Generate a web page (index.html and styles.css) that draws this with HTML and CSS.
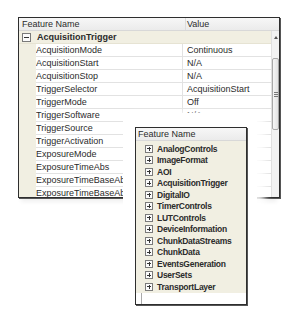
FILE: index.html
```html
<!DOCTYPE html>
<html lang="en">
<head>
    <meta charset="UTF-8">
    <title>Feature Grid</title>
    <link rel="stylesheet" href="styles.css">
</head>
<body>

<!-- Main feature grid -->
<div class="grid-window">
    <div class="grid-head">
        <div class="head-name">Feature Name</div>
        <div class="head-value">Value</div>
    </div>
    <div class="grid-body">
        <div class="rows">
            <div class="group"><span class="box minus"></span>AcquisitionTrigger</div>
            <div class="row"><span class="name">AcquisitionMode</span><span class="value">Continuous</span></div>
            <div class="row"><span class="name">AcquisitionStart</span><span class="value">N/A</span></div>
            <div class="row"><span class="name">AcquisitionStop</span><span class="value">N/A</span></div>
            <div class="row"><span class="name">TriggerSelector</span><span class="value">AcquisitionStart</span></div>
            <div class="row"><span class="name">TriggerMode</span><span class="value">Off</span></div>
            <div class="row"><span class="name">TriggerSoftware</span><span class="value">N/A</span></div>
            <div class="row"><span class="name">TriggerSource</span><span class="value"></span></div>
            <div class="row"><span class="name">TriggerActivation</span><span class="value"></span></div>
            <div class="row"><span class="name">ExposureMode</span><span class="value"></span></div>
            <div class="row"><span class="name">ExposureTimeAbs</span><span class="value"></span></div>
            <div class="row"><span class="name">ExposureTimeBaseAbs</span><span class="value"></span></div>
            <div class="row"><span class="name">ExposureTimeBaseAbsUnit</span><span class="value"></span></div>
        </div>
        <div class="scrollbar">
            <div class="arrow"></div>
            <div class="thumb"><span class="grip"></span></div>
        </div>
    </div>
</div>

<!-- Collapsed category view, pasted over the grid -->
<div class="overlay">
    <div class="tree-window">
        <div class="tree-head">Feature Name</div>
        <div class="tree-rows">
            <div class="cat"><span class="box plus"></span>AnalogControls</div>
            <div class="cat"><span class="box plus"></span>ImageFormat</div>
            <div class="cat"><span class="box plus"></span>AOI</div>
            <div class="cat"><span class="box plus"></span>AcquisitionTrigger</div>
            <div class="cat"><span class="box plus"></span>DigitalIO</div>
            <div class="cat"><span class="box plus"></span>TimerControls</div>
            <div class="cat"><span class="box plus"></span>LUTControls</div>
            <div class="cat"><span class="box plus"></span>DeviceInformation</div>
            <div class="cat"><span class="box plus"></span>ChunkDataStreams</div>
            <div class="cat"><span class="box plus"></span>ChunkData</div>
            <div class="cat"><span class="box plus"></span>EventsGeneration</div>
            <div class="cat"><span class="box plus"></span>UserSets</div>
            <div class="cat"><span class="box plus"></span>TransportLayer</div>
        </div>
        <div class="tree-empty"></div>
    </div>
</div>

</body>
</html>
```

FILE: styles.css
```css
body {
    margin: 0;
    padding: 0;
    background: #ffffff;
    font-family: "Liberation Sans", Arial, sans-serif;
    font-size: 9px;
    color: #2b2b2b;
    position: relative;
    width: 300px;
    height: 330px;
    overflow: hidden;
}

/* main grid */
.grid-window {
    margin: 17px 0 0 18px;
    width: 260px;
    height: 179px;
    border: 1px solid #2e2e2e;
    box-shadow: 1px 1px 0 #555, 0 7px 4px -3px rgba(0, 0, 0, 0.06);
    display: flex;
    flex-direction: column;
    background: #fff;
}

.grid-head {
    height: 13px;
    display: flex;
    background: linear-gradient(#f7f7f7, #ebebeb);
    border-bottom: 1px solid #d8d8d8;
    box-sizing: border-box;
}

.head-name {
    width: 163px;
    padding-left: 3px;
    line-height: 12px;
    border-right: 1px solid #dcdcdc;
}

.head-value {
    flex: 1;
    padding-left: 1px;
    line-height: 12px;
}

.grid-body {
    flex: 1;
    display: flex;
    overflow: hidden;
}

.rows {
    flex: 1;
    overflow: hidden;
}

.group {
    height: 13px;
    background: #f1efe2;
    font-weight: bold;
    display: flex;
    align-items: center;
    border-bottom: 1px solid #e6e3d3;
    box-sizing: border-box;
}

.group .box {
    margin: 0 6px 0 3px;
}

.row {
    height: 13px;
    display: flex;
    background: linear-gradient(to right, #f1efe2 17px, #fff 17px);
}

.name {
    margin-left: 17px;
    width: 146px;
    line-height: 12px;
    border-bottom: 1px solid #e2e2e2;
    white-space: nowrap;
    overflow: hidden;
}

.value {
    flex: 1;
    padding-left: 4px;
    line-height: 12px;
    border-left: 1px solid #e2e2e2;
    border-bottom: 1px solid #e2e2e2;
    white-space: nowrap;
    overflow: hidden;
}

/* expander boxes */
.box {
    width: 7px;
    height: 7px;
    border: 1px solid #7a7a7a;
    background: #fbfbfb;
    position: relative;
    flex: none;
}

.box::before,
.box.plus::after {
    content: "";
    position: absolute;
    background: #333;
}

.box::before {
    left: 1px;
    top: 3px;
    width: 5px;
    height: 1px;
}

.box.plus::after {
    left: 3px;
    top: 1px;
    width: 1px;
    height: 5px;
}

/* scrollbar */
.scrollbar {
    width: 7px;
    background: #f2f2f2;
    border-left: 1px solid #e0e0e0;
    position: relative;
}

.arrow {
    margin: 5px auto 0;
    width: 0;
    height: 0;
    border-left: 2px solid transparent;
    border-right: 2px solid transparent;
    border-bottom: 3px solid #555;
}

.thumb {
    margin-top: 19px;
    height: 70px;
    border: 1px solid #a8a8a8;
    border-radius: 2px;
    background: linear-gradient(to right, #f6f6f6, #e2e2e2);
    display: flex;
    align-items: center;
    justify-content: center;
}

.grip {
    width: 4px;
    height: 5px;
    background: repeating-linear-gradient(#777 0 1px, transparent 1px 2px);
}

/* pasted second screenshot */
.overlay {
    position: absolute;
    left: 123px;
    top: 113px;
    width: 134px;
    height: 205px;
    background: #fff;
    box-shadow: 8px 0 7px rgba(255, 255, 255, 0.85);
}

.tree-window {
    margin: 14px 0 0 12px;
    width: 110px;
    height: 176px;
    border: 1px solid #2e2e2e;
    box-shadow: 1px 1px 0 #555;
    display: flex;
    flex-direction: column;
    background: #fff;
}

.tree-head {
    height: 13px;
    line-height: 12px;
    padding-left: 2px;
    background: linear-gradient(#f7f7f7, #ebebeb);
    border-bottom: 1px solid #d8d8d8;
    box-sizing: border-box;
}

.tree-rows {
    padding-top: 2px;
    background: #f1efe2;
}

.cat {
    height: 11.5px;
    display: flex;
    align-items: center;
    font-weight: bold;
    font-size: 8.5px;
    letter-spacing: -0.25px;
    white-space: nowrap;
}

.cat .box {
    margin: 0 4px 0 9px;
    width: 6px;
    height: 6px;
}

.cat .box::before {
    top: 2.5px;
    width: 4px;
}

.cat .box.plus::after {
    left: 2.5px;
    height: 4px;
}

.tree-empty {
    flex: 1;
    margin-left: 5px;
    border-left: 1px solid #aaa;
}
```
